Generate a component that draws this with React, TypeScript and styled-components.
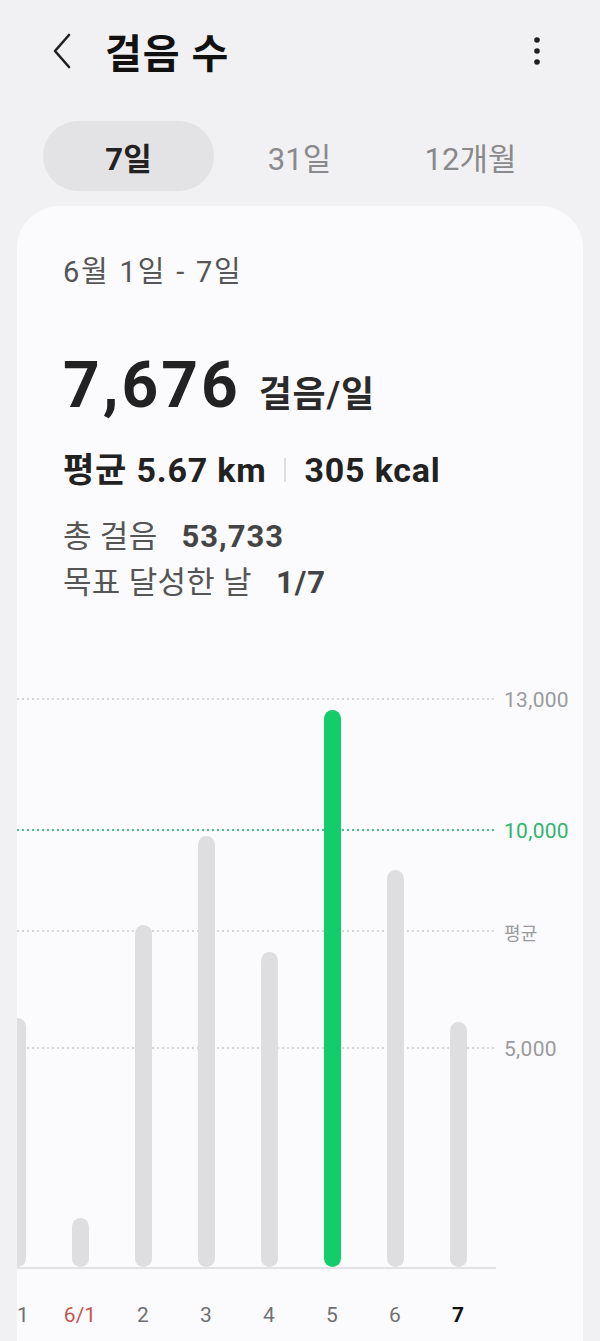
import React from 'react';
import styled, {createGlobalStyle} from 'styled-components';

interface IDay {
    label: string,
    steps: number,
    tone?: 'holiday' | 'today'
}

interface IGuide {
    value: number,
    label: string,
    goal?: boolean,
    small?: boolean
}

const PX_PER_STEP = 0.04362;
const PLOT_HEIGHT = 600;
const GOAL = 10000;

const days: IDay[] = [
    {label: '31', steps: 5711},
    {label: '6/1', steps: 1124, tone: 'holiday'},
    {label: '2', steps: 7844},
    {label: '3', steps: 9885},
    {label: '4', steps: 7225},
    {label: '5', steps: 12775},
    {label: '6', steps: 9105},
    {label: '7', steps: 5619, tone: 'today'},
];

const guides: IGuide[] = [
    {value: 13000, label: '13,000'},
    {value: 10000, label: '10,000', goal: true},
    {value: 7676, label: '평균', small: true},
    {value: 5000, label: '5,000'},
];

const GlobalStyle = createGlobalStyle`
  body {
    margin: 0;
    background: #f1f1f3;
    font-family: Roboto, "Noto Sans CJK KR", sans-serif;
    color: #1c1c1c;
  }
`;

function BackIcon() {
    return (
        <svg width="20" height="36" viewBox="0 0 20 36" fill="none">
            <path d="M17 2 L3 18 L17 34" stroke="#1f1f1f" strokeWidth="2.6" strokeLinecap="round" strokeLinejoin="round"/>
        </svg>
    );
}

function MoreIcon() {
    return (
        <svg width="8" height="30" viewBox="0 0 8 30">
            <circle cx="4" cy="4" r="2.8" fill="#1f1f1f"/>
            <circle cx="4" cy="15" r="2.8" fill="#1f1f1f"/>
            <circle cx="4" cy="26" r="2.8" fill="#1f1f1f"/>
        </svg>
    );
}

function App() {
    const tabs = ['7일', '31일', '12개월'];

    return (
        <Page>
            <GlobalStyle/>
            <Header>
                <IconButton><BackIcon/></IconButton>
                <Title>걸음 수</Title>
                <MoreButton><MoreIcon/></MoreButton>
            </Header>

            <Tabs>
                {tabs.map((t, i) => <Tab key={t} $active={i === 0}>{t}</Tab>)}
            </Tabs>

            <Card>
                <DateRange>6월 1일 - 7일</DateRange>
                <Headline>
                    <BigNumber>7,676</BigNumber>
                    <Unit>걸음/일</Unit>
                </Headline>
                <StatsRow>
                    <span>평균 5.67 km</span>
                    <Divider/>
                    <span>305 kcal</span>
                </StatsRow>
                <InfoBlock>
                    <InfoRow>총 걸음<InfoValue>53,733</InfoValue></InfoRow>
                    <InfoRow>목표 달성한 날<InfoValue>1/7</InfoValue></InfoRow>
                </InfoBlock>

                <Chart>
                    <Plot>
                        {guides.map(g => (
                            <GuideLine key={g.label} $goal={g.goal} style={{bottom: g.value * PX_PER_STEP}}/>
                        ))}
                        <Bars>
                            {days.map(d => (
                                <BarCol key={d.label}>
                                    <Bar $goal={d.steps >= GOAL * 1.2} style={{height: d.steps * PX_PER_STEP}}/>
                                </BarCol>
                            ))}
                        </Bars>
                    </Plot>
                    <YAxis>
                        {guides.map(g => (
                            <YLabel key={g.label} $goal={g.goal} $small={g.small}
                                    style={{top: PLOT_HEIGHT - g.value * PX_PER_STEP}}>
                                {g.label}
                            </YLabel>
                        ))}
                    </YAxis>
                </Chart>
                <XLabels>
                    {days.map(d => <XLabel key={d.label} $tone={d.tone}>{d.label}</XLabel>)}
                </XLabels>
            </Card>
        </Page>
    );
}

const Page = styled.div`
  width: 600px;
  height: 1341px;
  overflow: hidden;
`;

const Header = styled.header`
  display: flex;
  align-items: center;
  height: 102px;
  padding: 0 52px 0 52px;
`;

const IconButton = styled.div`
  display: flex;
  align-items: center;
  width: 20px;
`;

const Title = styled.h1`
  margin: 0 0 0 33px;
  font-size: 40px;
  font-weight: 700;
  letter-spacing: 1px;
  color: #111;
`;

const MoreButton = styled.div`
  display: flex;
  margin-left: auto;
  margin-right: 7px;
`;

const Tabs = styled.nav`
  display: grid;
  grid-template-columns: repeat(3, 171px);
  margin: 19px 0 0 43px;
`;

const Tab = styled.div<{ $active?: boolean }>`
  height: 70px;
  border-radius: 35px;
  display: flex;
  align-items: center;
  justify-content: center;
  font-size: 31px;
  font-weight: ${p => p.$active ? 700 : 400};
  color: ${p => p.$active ? '#222' : '#8a8a8c'};
  background: ${p => p.$active ? '#e3e3e6' : 'transparent'};
`;

const Card = styled.section`
  margin: 15px 17px 0;
  padding: 50px 0 0 46px;
  height: 1200px;
  background: #fbfbfd;
  border-radius: 42px;
  overflow: hidden;
`;

const DateRange = styled.div`
  font-size: 29px;
  line-height: 32px;
  letter-spacing: 1.8px;
  word-spacing: 1px;
  color: #555;
`;

const Headline = styled.div`
  display: flex;
  align-items: baseline;
  gap: 18px;
  margin-top: 66px;
`;

const BigNumber = styled.span`
  font-size: 64px;
  line-height: 1;
  font-weight: 700;
  letter-spacing: 3px;
  color: #222;
`;

const Unit = styled.span`
  font-size: 36px;
  font-weight: 600;
  letter-spacing: 0.8px;
  color: #2a2a2a;
`;

const StatsRow = styled.div`
  display: flex;
  align-items: center;
  margin-top: 32px;
  font-size: 34px;
  line-height: 40px;
  font-weight: 700;
  letter-spacing: 0.8px;
  color: #222;
`;

const Divider = styled.i`
  width: 2px;
  height: 24px;
  margin: 0 18px;
  background: #dedede;
`;

const InfoBlock = styled.div`
  margin-top: 24px;
`;

const InfoRow = styled.div`
  display: flex;
  align-items: baseline;
  font-size: 31px;
  line-height: 46px;
  letter-spacing: 0.3px;
  color: #555;
`;

const InfoValue = styled.b`
  margin-left: 24px;
  font-weight: 700;
  letter-spacing: 1px;
  color: #444;
`;

const Chart = styled.div`
  display: grid;
  grid-template-columns: 479px 1fr;
  margin: 61px 0 0 -46px;
`;

const Plot = styled.div`
  position: relative;
  height: ${PLOT_HEIGHT}px;
  border-bottom: 2px solid #e2e2e4;
`;

const GuideLine = styled.div<{ $goal?: boolean }>`
  position: absolute;
  left: 0;
  right: 0;
  height: 2px;
  background-image: linear-gradient(to right, ${p => p.$goal ? '#49c08c' : '#d6d6d8'} 40%, transparent 40%);
  background-size: 5px 2px;
`;

const Bars = styled.div`
  position: relative;
  display: flex;
  align-items: flex-end;
  height: 100%;
  margin-left: -31.5px;
`;

const BarCol = styled.div`
  display: flex;
  justify-content: center;
  flex: 0 0 63px;
`;

const Bar = styled.div<{ $goal?: boolean }>`
  width: 17px;
  border-radius: 9px;
  background: ${p => p.$goal ? '#13cd6b' : '#dedee0'};
`;

const YAxis = styled.div`
  position: relative;
`;

const YLabel = styled.span<{ $goal?: boolean, $small?: boolean }>`
  position: absolute;
  left: 8px;
  transform: translateY(-50%);
  font-size: ${p => p.$small ? 18 : 21}px;
  letter-spacing: 0.3px;
  color: ${p => p.$goal ? '#2fb46e' : '#9a9a9c'};
  white-space: nowrap;
`;

const XLabels = styled.div`
  display: flex;
  margin: 34px 0 0 -77.5px;
`;

const XLabel = styled.span<{ $tone?: 'holiday' | 'today' }>`
  flex: 0 0 63px;
  text-align: center;
  font-size: 21px;
  font-weight: ${p => p.$tone === 'today' ? 700 : 400};
  color: ${p => p.$tone === 'holiday' ? '#c4544f' : p.$tone === 'today' ? '#111' : '#707072'};
`;

export default App;
